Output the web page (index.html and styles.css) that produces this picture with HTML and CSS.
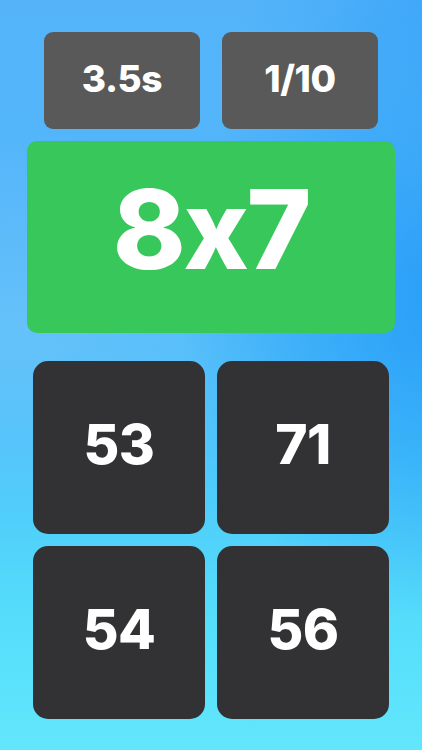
FILE: index.html
```html
<!DOCTYPE html>
<html lang="en">
<head>
<meta charset="utf-8">
<title>Multiplication Quiz</title>
<link rel="stylesheet" href="styles.css">
</head>
<body>
<main class="screen">
  <div class="stats">
    <div class="stat">3.5s</div>
    <div class="stat">1/10</div>
  </div>
  <div class="question">8x7</div>
  <div class="answers">
    <div class="answer">53</div>
    <div class="answer">71</div>
    <div class="answer">54</div>
    <div class="answer">56</div>
  </div>
</main>
</body>
</html>
```
FILE: styles.css
```css
html, body {
  margin: 0;
  padding: 0;
}
body {
  width: 422px;
  height: 750px;
  overflow: hidden;
  font-family: "Inter", "Noto Sans", sans-serif;
  font-feature-settings: "calt" 0;
  color: #ffffff;
  background:
    radial-gradient(ellipse 260px 320px at 440px 300px, rgba(36, 156, 248, 0.9), rgba(36, 156, 248, 0) 100%),
    radial-gradient(ellipse 200px 160px at 440px 0px, rgba(50, 160, 248, 0.6), rgba(50, 160, 248, 0) 100%),
    radial-gradient(ellipse 300px 200px at 20px 330px, rgba(110, 196, 250, 0.7), rgba(110, 196, 250, 0) 100%),
    linear-gradient(180deg, #55b4f9 0%, #52b6f9 35%, #4cc6fa 60%, #56dffb 85%, #62e6fc 100%);
}
.screen {
  display: flex;
  flex-direction: column;
  align-items: center;
  padding-top: 32px;
}
.stats {
  display: flex;
  gap: 22px;
}
.stat {
  width: 156px;
  height: 97px;
  box-sizing: border-box;
  padding-bottom: 5px;
  border-radius: 9px;
  background: #595959;
  display: flex;
  align-items: center;
  justify-content: center;
  font-size: 37px;
  font-weight: 800;
  letter-spacing: -0.01em;
  line-height: 1;
}
.question {
  margin-top: 12px;
  width: 368px;
  height: 192px;
  box-sizing: border-box;
  padding-bottom: 16px;
  border-radius: 10px;
  background: #37c75b;
  display: flex;
  align-items: center;
  justify-content: center;
  font-size: 110px;
  font-weight: 800;
  letter-spacing: -0.02em;
  line-height: 1;
}
.answers {
  margin-top: 28px;
  display: grid;
  grid-template-columns: 172px 172px;
  grid-auto-rows: 173px;
  gap: 12px;
}
.answer {
  box-sizing: border-box;
  padding-bottom: 6px;
  border-radius: 15px;
  background: #323234;
  display: flex;
  align-items: center;
  justify-content: center;
  font-size: 55px;
  font-weight: 800;
  letter-spacing: -0.01em;
  line-height: 1;
}
```
